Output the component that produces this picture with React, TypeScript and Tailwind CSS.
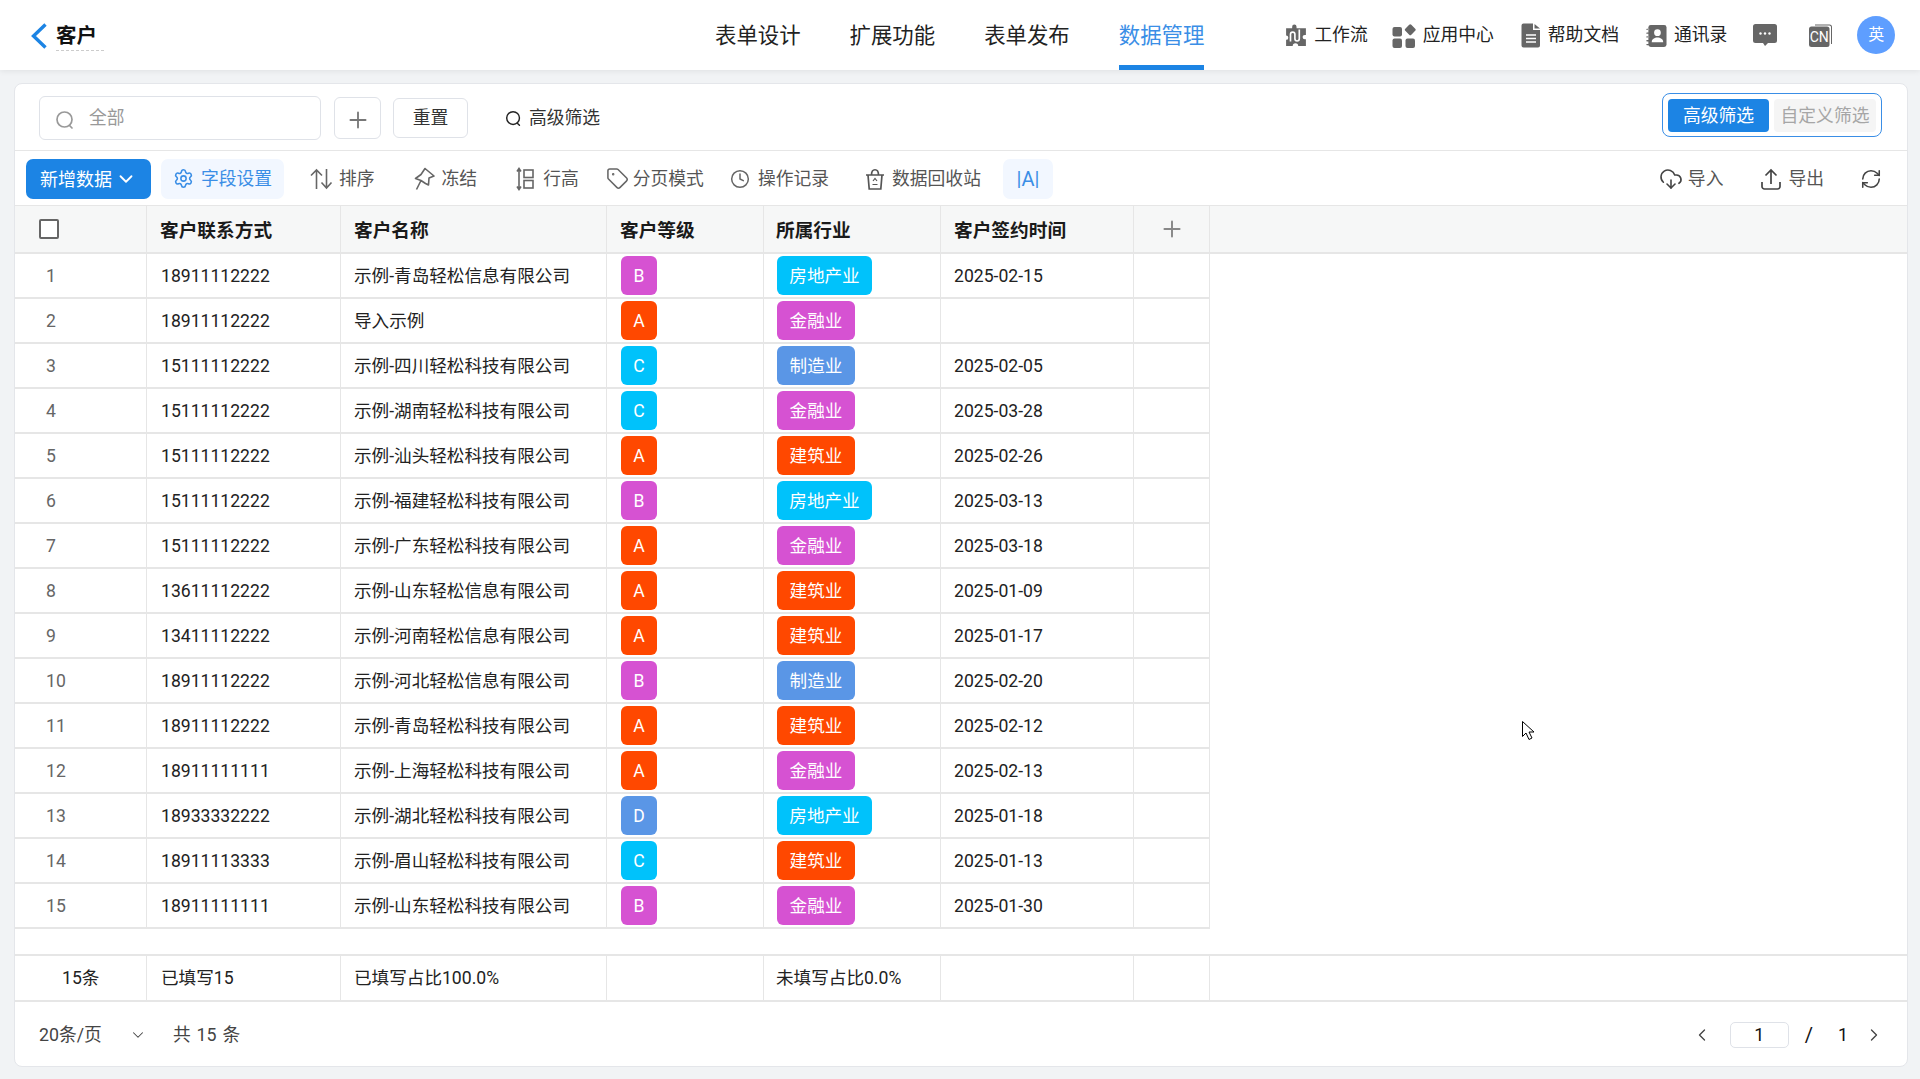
import { ChevronDown, ChevronLeft, ChevronRight, Clock, CloudDownload, Plus, RefreshCw, Settings, Tag } from 'lucide-react'
import { ReactNode } from 'react'

type Row = { phone: string; name: string; level: string; trade: string; date: string }

const rows: Row[] = [
  { phone: '18911112222', name: '示例-青岛轻松信息有限公司', level: 'B', trade: '房地产业', date: '2025-02-15' },
  { phone: '18911112222', name: '导入示例', level: 'A', trade: '金融业', date: '' },
  { phone: '15111112222', name: '示例-四川轻松科技有限公司', level: 'C', trade: '制造业', date: '2025-02-05' },
  { phone: '15111112222', name: '示例-湖南轻松科技有限公司', level: 'C', trade: '金融业', date: '2025-03-28' },
  { phone: '15111112222', name: '示例-汕头轻松科技有限公司', level: 'A', trade: '建筑业', date: '2025-02-26' },
  { phone: '15111112222', name: '示例-福建轻松科技有限公司', level: 'B', trade: '房地产业', date: '2025-03-13' },
  { phone: '15111112222', name: '示例-广东轻松科技有限公司', level: 'A', trade: '金融业', date: '2025-03-18' },
  { phone: '13611112222', name: '示例-山东轻松信息有限公司', level: 'A', trade: '建筑业', date: '2025-01-09' },
  { phone: '13411112222', name: '示例-河南轻松信息有限公司', level: 'A', trade: '建筑业', date: '2025-01-17' },
  { phone: '18911112222', name: '示例-河北轻松信息有限公司', level: 'B', trade: '制造业', date: '2025-02-20' },
  { phone: '18911112222', name: '示例-青岛轻松科技有限公司', level: 'A', trade: '建筑业', date: '2025-02-12' },
  { phone: '18911111111', name: '示例-上海轻松科技有限公司', level: 'A', trade: '金融业', date: '2025-02-13' },
  { phone: '18933332222', name: '示例-湖北轻松科技有限公司', level: 'D', trade: '房地产业', date: '2025-01-18' },
  { phone: '18911113333', name: '示例-眉山轻松科技有限公司', level: 'C', trade: '建筑业', date: '2025-01-13' },
  { phone: '18911111111', name: '示例-山东轻松科技有限公司', level: 'B', trade: '金融业', date: '2025-01-30' },
]

const levelColor: Record<string, string> = {
  A: 'bg-[#ff4800]',
  B: 'bg-[#d652d2]',
  C: 'bg-[#00c2fb]',
  D: 'bg-[#5a96e6]',
}

const tradeColor: Record<string, string> = {
  房地产业: 'bg-[#00c2fb] w-[95px]',
  金融业: 'bg-[#d652d2] w-[78px]',
  制造业: 'bg-[#5a96e6] w-[78px]',
  建筑业: 'bg-[#ff4800] w-[78px]',
}

const cols = ['w-[132px]', 'w-[194px]', 'w-[266px]', 'w-[157px]', 'w-[177px]', 'w-[193px]', 'w-[76px]']

const Cell = ({ col, className = '', children }: { col: number; className?: string; children?: ReactNode }) => (
  <div className={`flex h-full shrink-0 items-center border-r border-[#e6e6e6] ${cols[col]} ${className}`}>{children}</div>
)

const SearchRing = ({ className }: { className: string }) => (
  <svg viewBox="0 0 20 20" fill="none" stroke="currentColor" strokeWidth="1.7" strokeLinecap="round" className={className}>
    <circle cx="9.5" cy="9.5" r="7.5" />
    <path d="M14.5 15.5l2.5 2.5" />
  </svg>
)

// top bar glyphs, all the same grey fill
const FlowIcon = () => (
  <svg viewBox="0 0 20 22" className="h-[26px] w-[22px] text-[#666]" fill="currentColor">
    <path d="M1 4h5.5V2.5a2 2 0 0 1 4 0V4H19v6h-1a2 2 0 0 0 0 4h1v6h-7a2.5 2.5 0 0 0-5 0H1v-5.500a2 2 0 0 0 0-4z" />
    <path d="M5 16V9.500a2 2 0 0 1 4 0v4a2 2 0 0 0 4 0V5" fill="none" stroke="#fff" strokeWidth="1.5" />
  </svg>
)

const AppsIcon = () => (
  <svg viewBox="0 0 24 24" className="h-[26px] w-[24px] text-[#666]" fill="currentColor">
    <rect x="0.500" y="3" width="9.500" height="9.500" rx="2" />
    <rect x="0.500" y="14.500" width="9.500" height="9.500" rx="2" />
    <rect x="13.500" y="14.500" width="9.500" height="9.500" rx="2" />
    <rect x="14" y="1.500" width="8.500" height="8.500" rx="1.500" transform="rotate(45 18.250 5.750)" />
  </svg>
)

const DocIcon = () => (
  <svg viewBox="0 0 20 24" className="h-[25px] w-[20px] text-[#666]" fill="currentColor">
    <path d="M2.500 0H12v6.500h7V22a2 2 0 0 1-2 2H2.500a2 2 0 0 1-2-2V2a2 2 0 0 1 2-2z" />
    <path d="M13.500 0.500L19 5h-5.500z" />
    <path d="M5 11.500h10M5 15h10M5 18.500h10" stroke="#fff" strokeWidth="1.500" />
  </svg>
)

const BookIcon = () => (
  <svg viewBox="0 0 22 24" className="h-[24px] w-[21px] text-[#666]" fill="currentColor">
    <rect x="2.500" y="0.500" width="19" height="23" rx="2.500" />
    <path d="M1 5h3M1 9h3M1 13h3M1 17h3M1 21h3" stroke="currentColor" strokeWidth="1.400" strokeLinecap="round" />
    <path d="M1.500 5h2M1.500 13h2" stroke="#fff" strokeWidth="0.500" />
    <circle cx="12" cy="8.500" r="3.500" fill="#fff" />
    <path d="M6 18.500c0-3.500 3-5 6-5s6 1.500 6 5z" fill="#fff" />
  </svg>
)

const ChatIcon = () => (
  <svg viewBox="0 0 24 22" className="h-[22px] w-[24px] text-[#666]" fill="currentColor">
    <path d="M2.500 0h19A2.500 2.500 0 0 1 24 2.500v14a2.500 2.500 0 0 1-2.500 2.500H15l-3 3-2-3H2.500A2.500 2.500 0 0 1 0 16.500v-14A2.500 2.500 0 0 1 2.500 0z" />
    <circle cx="7.500" cy="9.500" r="1.200" fill="#fff" />
    <circle cx="12" cy="9.500" r="1.200" fill="#fff" />
    <circle cx="16.500" cy="9.500" r="1.200" fill="#fff" />
  </svg>
)

const LangIcon = () => (
  <svg viewBox="0 0 23 23" className="h-[23px] w-[23px]">
    <path d="M6 0.500h14.500A2.500 2.500 0 0 1 23 3v17h-1V3a1.500 1.500 0 0 0-1.500-1.500H6z" fill="#666" />
    <rect x="0" y="2.500" width="20.500" height="20.500" rx="2.500" fill="#666" />
    <text x="10.250" y="18" textAnchor="middle" fontSize="14" fill="#fff" fontFamily="Roboto, sans-serif">CN</text>
  </svg>
)

const NavLink = ({ icon, label, className }: { icon: ReactNode; label: string; className: string }) => (
  <div className={`flex items-center gap-[7px] pt-[1px] text-[17.800px] text-[#222] ${className}`}>
    {icon}
    <span>{label}</span>
  </div>
)

const Tool = ({ icon, label, className }: { icon: ReactNode; label: string; className: string }) => (
  <div className={`flex items-center text-[17.800px] text-[#555] ${className}`}>
    {icon}
    <span className="pt-[2px]">{label}</span>
  </div>
)

export default function App() {
  return (
    <div className="relative flex h-[1079px] w-[1920px] flex-col overflow-hidden bg-[#f1f3f5] font-[Roboto,'Noto_Sans_CJK_SC',sans-serif]">
      <header className="z-10 flex h-[70px] shrink-0 items-center bg-white shadow-[0_1px_6px_rgba(0,0,0,0.08)]">
        <svg viewBox="0 0 16 26" fill="none" stroke="#1c84e4" strokeWidth="3.400" className="ml-[31px] mt-[1px] h-[26px] w-[16px]">
          <path d="M14.500 1.500L2.500 13l12 11.500" />
        </svg>
        <div className="relative ml-[9px] pt-[3px]">
          <span className="text-[20.500px] font-bold text-[#111]">客户</span>
          <div className="absolute left-0 top-[32px] w-[48px] border-b border-dashed border-[#ccc]" />
        </div>
        <nav className="ml-[618px] flex h-full gap-[49px] text-[21.400px] text-[#222]">
          <div className="flex items-center pt-[3px]">表单设计</div>
          <div className="flex items-center pt-[3px]">扩展功能</div>
          <div className="flex items-center pt-[3px]">表单发布</div>
          <div className="flex items-center border-b-[5px] border-[#1c84e4] pt-[8px] text-[#3a8ee6]">数据管理</div>
        </nav>
        <NavLink icon={<FlowIcon />} label="工作流" className="ml-[81px]" />
        <NavLink icon={<AppsIcon />} label="应用中心" className="ml-[24px]" />
        <NavLink icon={<DocIcon />} label="帮助文档" className="ml-[27px]" />
        <NavLink icon={<BookIcon />} label="通讯录" className="ml-[27px]" />
        <div className="ml-[26px]"><ChatIcon /></div>
        <div className="ml-[32px]"><LangIcon /></div>
        <div className="ml-[25px] flex h-[38px] w-[38px] items-center justify-center rounded-full bg-[#5e9eff] text-[16px] text-white">英</div>
      </header>

      <main className="ml-[14px] mt-[13px] flex h-[984px] w-[1894px] flex-col rounded-[8px] border border-[#e4e6ea] bg-white">
        {/* filter row */}
        <div className="flex h-[67px] shrink-0 items-center border-b border-[#e6e6e6] pl-[24px] pt-[2px] text-[17.800px]">
          <div className="flex h-[44px] w-[282px] items-center rounded-[6px] border border-[#dfe2e8] pl-[15px] text-[#999]">
            <SearchRing className="mt-[3px] h-[20px] w-[20px]" />
            <span className="ml-[14px]">全部</span>
          </div>
          <div className="ml-[13px] flex h-[42px] w-[47px] items-center justify-center rounded-[6px] border border-[#dfe2e8] text-[#777]">
            <Plus size={26} strokeWidth={1.700} className="mt-[3px]" />
          </div>
          <div className="ml-[12px] flex h-[40px] w-[75px] items-center justify-center rounded-[6px] border border-[#dfe2e8] text-[#333]">重置</div>
          <SearchRing className="ml-[37px] h-[17px] w-[17px] text-[#222]" />
          <span className="ml-[7px] text-[#333]">高级筛选</span>
          <div className="mb-[6px] ml-auto mr-[25px] flex h-[44px] w-[220px] items-center gap-[5px] rounded-[8px] border border-[#3a8ee6] px-[5px]">
            <div className="flex h-[33px] w-[101px] items-center justify-center rounded-[4px] bg-[#1c84e4] pt-[2px] text-white">高级筛选</div>
            <div className="flex h-[33px] w-[102px] items-center justify-center rounded-[4px] bg-[#f5f5f5] pt-[2px] text-[#a6a6a6]">自定义筛选</div>
          </div>
        </div>

        {/* toolbar */}
        <div className="flex h-[55px] shrink-0 items-center border-b border-[#e6e6e6] pl-[11px] pt-[1px]">
          <div className="flex h-[40px] w-[125px] items-center justify-center gap-[3px] rounded-[7px] bg-[#1c84e4] text-[18px] text-white">
            <span className="pt-[1px]">新增数据</span>
            <ChevronDown size={22} strokeWidth={2} />
          </div>
          <div className="ml-[10px] flex h-[40px] w-[123px] items-center justify-center gap-[7px] rounded-[7px] bg-[#f2f7ff] text-[17.800px] text-[#3a8ee6]">
            <Settings size={21} strokeWidth={1.800} />
            <span className="pt-[1px]">字段设置</span>
          </div>
          <Tool
            className="ml-[26px] gap-[6px]"
            label="排序"
            icon={
              <svg viewBox="0 0 23 22" fill="none" stroke="#666" strokeWidth="1.600" className="h-[22px] w-[23px]">
                <path d="M6.500 21V2M1 7.500L6.500 2 12 7.500M16.500 1v19M11.500 14.500l5 5.500 5-5.500" />
              </svg>
            }
          />
          <Tool
            className="ml-[39px] gap-[7px]"
            label="冻结"
            icon={
              <svg viewBox="0 0 21 24" fill="none" stroke="#666" strokeWidth="1.600" strokeLinejoin="round" className="h-[24px] w-[21px]">
                <path d="M11 1.500l9 7.500-5 2-.5 7-3-1.500L7 13.500 1.500 11.500 7 7.500zM7 13.500L2.500 22.500" />
              </svg>
            }
          />
          <Tool
            className="ml-[39px] gap-[9px]"
            label="行高"
            icon={
              <svg viewBox="0 0 18 24" fill="none" stroke="#666" strokeWidth="1.600" className="h-[24px] w-[18px]">
                <path d="M3 2v20M1 4.500L3 1.500l2 3M1 19.500l2 3 2-3" />
                <rect x="8" y="3" width="9" height="7.500" />
                <rect x="8" y="13.500" width="9" height="7.500" />
              </svg>
            }
          />
          <Tool className="ml-[27px] gap-[4px]" label="分页模式" icon={<Tag size={23} strokeWidth={1.600} color="#666" />} />
          <Tool className="ml-[26px] gap-[8px]" label="操作记录" icon={<Clock size={20} strokeWidth={1.800} color="#666" />} />
          <Tool
            className="ml-[36px] gap-[7px]"
            label="数据回收站"
            icon={
              <svg viewBox="0 0 20 22" fill="none" stroke="#555" strokeWidth="1.700" className="h-[22px] w-[20px]">
                <path d="M1 7h18M3 7l1.200 14h11.600L17 7M6.500 7c0-7 7-7 7 0" />
                <path d="M8 13l2-2.500 2 2.500M7.500 16.500h5" strokeWidth="1.200" />
              </svg>
            }
          />
          <div className="ml-[22px] flex h-[40px] w-[50px] items-center justify-center rounded-[7px] bg-[#f2f7ff] text-[20px] text-[#3a8ee6]">|A|</div>
          <Tool className="ml-auto gap-[5px]" label="导入" icon={<CloudDownload size={24} strokeWidth={1.600} color="#444" />} />
          <Tool
            className="ml-[38px] gap-[7px]"
            label="导出"
            icon={
              <svg viewBox="0 0 20 22" fill="none" stroke="#444" strokeWidth="1.700" className="h-[22px] w-[20px]">
                <path d="M10 16V2M4.500 7.500L10 2l5.500 5.500M1 14v4.500A2.500 2.500 0 0 0 3.500 21h13a2.500 2.500 0 0 0 2.500-2.500V14" />
              </svg>
            }
          />
          <RefreshCw size={22} strokeWidth={1.700} color="#444" className="ml-[36px] mr-[25px]" />
        </div>

        {/* table head */}
        <div className="flex h-[48px] shrink-0 items-stretch border-b-2 border-[#e6e6e6] bg-[#f6f7f7] text-[18.700px] font-bold text-[#1a1a1a]">
          <Cell col={0} className="pl-[24px]">
            <div className="h-[20px] w-[20px] rounded-[2px] border-2 border-[#666] bg-white" />
          </Cell>
          <Cell col={1} className="pl-[13px] pt-[4px]">客户联系方式</Cell>
          <Cell col={2} className="pl-[13px] pt-[4px]">客户名称</Cell>
          <Cell col={3} className="pl-[13px] pt-[4px]">客户等级</Cell>
          <Cell col={4} className="pl-[12px] pt-[4px]">所属行业</Cell>
          <Cell col={5} className="pl-[13px] pt-[4px]">客户签约时间</Cell>
          <Cell col={6} className="justify-center text-[#888]">
            <Plus size={26} strokeWidth={1.800} />
          </Cell>
        </div>

        {/* table body */}
        <div className="flex shrink-0 flex-col">
          {rows.map((row, i) => (
            <div key={i} className="flex h-[45px] w-[1195px] items-stretch border-b-2 border-[#e6e6e6] text-[17.600px] text-[#222]">
              <Cell col={0} className="pl-[31px] pt-[1px] text-[#666]">{i + 1}</Cell>
              <Cell col={1} className="pl-[14px] pt-[2px]">{row.phone}</Cell>
              <Cell col={2} className="pl-[13px] pt-[2px]">{row.name}</Cell>
              <Cell col={3} className="pl-[14px]">
                <div className={`flex h-[39px] w-[36px] items-center justify-center rounded-[6px] pt-[2px] text-white ${levelColor[row.level]}`}>{row.level}</div>
              </Cell>
              <Cell col={4} className="pl-[13px]">
                <div className={`flex h-[39px] items-center justify-center rounded-[6px] pt-[2px] text-white ${tradeColor[row.trade]}`}>{row.trade}</div>
              </Cell>
              <Cell col={5} className="pl-[13px] pt-[2px]">{row.date}</Cell>
              <Cell col={6} />
            </div>
          ))}
        </div>

        <div className="h-[27px] shrink-0 border-b-2 border-[#e6e6e6]" />

        {/* summary */}
        <div className="flex h-[46px] shrink-0 items-stretch border-b-2 border-[#e6e6e6] text-[17.600px] text-[#222]">
          <Cell col={0} className="pl-[47px]">15条</Cell>
          <Cell col={1} className="pl-[14px]">已填写15</Cell>
          <Cell col={2} className="pl-[13px]">已填写占比100.0%</Cell>
          <Cell col={3} />
          <Cell col={4} className="pl-[12px]">未填写占比0.0%</Cell>
          <Cell col={5} />
          <Cell col={6} />
        </div>

        {/* pagination */}
        <div className="flex flex-1 items-center pl-[24px] pt-[2px] text-[17.800px] text-[#444]">
          <span>20条/页</span>
          <ChevronDown size={18} strokeWidth={1.400} className="ml-[27px]" />
          <span className="ml-[26px] [word-spacing:1.500px]">共 15 条</span>
          <ChevronLeft size={20} strokeWidth={1.600} className="ml-auto" />
          <div className="ml-[18px] flex h-[26px] w-[59px] items-center justify-center rounded-[5px] border border-[#dfe2e8] text-[#111]">1</div>
          <span className="ml-[16px] text-[20px] text-[#111]">/</span>
          <span className="ml-[25px] text-[#111]">1</span>
          <ChevronRight size={20} strokeWidth={1.600} className="ml-[16px] mr-[23px]" />
        </div>
      </main>

      {/* mouse pointer caught in the screenshot */}
      <svg viewBox="0 0 13 21" className="absolute left-[1522px] top-[721px] h-[21px] w-[13px]" fill="#fff" stroke="#000" strokeWidth="1">
        <path d="M0.500 0.500v15l3.500-3.500 3 6.500 3-1.500-3-6h5z" />
      </svg>
    </div>
  )
}
